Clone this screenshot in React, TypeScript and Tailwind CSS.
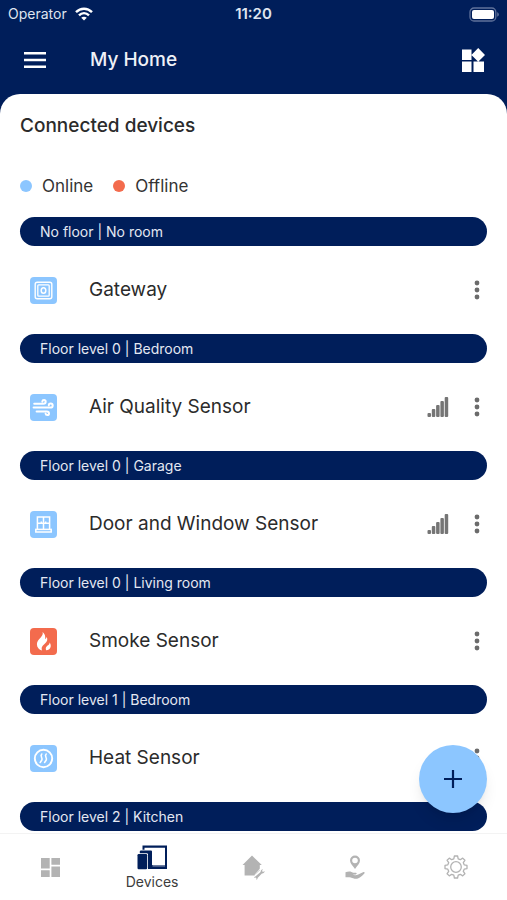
import type { ReactNode } from "react";

type Device = {
    place: string;
    name: string;
    icon: ReactNode;
    online: boolean;
    signal?: boolean;
};

function GatewayIcon() {
    return (
        <svg viewBox="0 0 27 27" className="size-[27px]" fill="none" stroke="#fff">
            <rect x="5.2" y="5.2" width="16.6" height="16.6" rx="2" strokeWidth="1.4" />
            <rect x="7.800" y="7.800" width="11.400" height="11.400" rx="1" strokeWidth="1.300" />
            <ellipse cx="13.5" cy="13.5" rx="2.3" ry="2.8" strokeWidth="1.5" />
        </svg>
    );
}

function WindIcon() {
    return (
        <svg viewBox="0 0 27 27" className="size-[27px]" fill="none" stroke="#fff" strokeWidth="2" strokeLinecap="round">
            <path d="M4.2 9.8h9.2c1.5 0 2.3-.9 2.3-2s-.8-1.7-1.7-1.7c-.9 0-1.6.6-1.7 1.4" />
            <path d="M3.6 13.6h16.6c1.6 0 2.5-1 2.5-2.2s-.9-2-2-2c-1.1 0-1.9.8-1.9 1.8" />
            <path d="M6.6 17.4h10.2c1.4 0 2.2.9 2.2 2s-.8 1.7-1.7 1.7c-.9 0-1.6-.6-1.7-1.4" />
        </svg>
    );
}

function WindowIcon() {
    return (
        <svg viewBox="0 0 27 27" className="size-[27px]" fill="none" stroke="#fff" strokeWidth="1.5">
            <path d="M7.4 18.4V6h12.2v12.4M13.5 6v12.4M7.4 12.2h12.2M11.3 12.2v-1.8M15.7 12.2v-1.8" />
            <rect x="5.8" y="18.4" width="15.4" height="2.6" />
        </svg>
    );
}

function FlameIcon() {
    return (
        <svg viewBox="0 0 27 27" className="size-[27px]" fill="#fff">
            <path d="M12.6 4c.6 2.4-.4 3.8-2.1 5.7C8.5 11.9 6.9 13.5 6.9 16.3c0 3.2 2.1 5.4 5.2 6.3-.8-1.9-.5-3.5.8-5 1.3-1.5 3.6-2.700 4.2-5 .4-1.4.1-2.6-.5-3.500-.2 1-.6 1.700-1.400 2.200.3-3.100-.4-5.700-2.600-7.300z" />
            <path d="M19.5 14.5c.2 1.4-.6 2.1-1.900 3.100-1.500 1.100-2.400 2.500-1.500 4.700 2.500-.2 4.300-1.600 4.600-3.800.2-1.600-.3-3-1.200-4z" />
        </svg>
    );
}

function HeatIcon() {
    return (
        <svg viewBox="0 0 27 27" className="size-[27px]" fill="none" stroke="#fff" strokeLinecap="round">
            <circle cx="13.5" cy="13.5" r="8.7" strokeWidth="1.9" />
            <path d="M11.800 9c-2.400 2.200 1.400 3.800 0 6.200-.4.800-1 1.500-1.600 2.200M16.200 9c-2.400 2.200 1.400 3.800 0 6.200-.4.800-1 1.500-1.600 2.200" strokeWidth="1.6" />
        </svg>
    );
}

function SignalIcon() {
    return (
        <svg viewBox="0 0 22 20" className="h-5 w-[22px]" fill="#757575" role="img" aria-label="Signal strength">
            <rect x="0.5" y="16" width="3.500" height="4" rx="1" />
            <rect x="4.8" y="12" width="3.500" height="8" rx="1" />
            <rect x="9.1" y="8" width="3.500" height="12" rx="1" />
            <rect x="13.4" y="4" width="3.500" height="16" rx="1" />
            <rect x="17.7" y="0" width="3.500" height="20" rx="1" />
        </svg>
    );
}

const devices: Device[] = [
    { place: "No floor | No room", name: "Gateway", icon: <GatewayIcon />, online: true },
    { place: "Floor level 0 | Bedroom", name: "Air Quality Sensor", icon: <WindIcon />, online: true, signal: true },
    { place: "Floor level 0 | Garage", name: "Door and Window Sensor", icon: <WindowIcon />, online: true, signal: true },
    { place: "Floor level 0 | Living room", name: "Smoke Sensor", icon: <FlameIcon />, online: false },
    { place: "Floor level 1 | Bedroom", name: "Heat Sensor", icon: <HeatIcon />, online: true },
];

function PlaceBar({ children }: { children: ReactNode }) {
    return (
        <h2 className="flex h-[29px] items-center rounded-full bg-[#001e5a] px-5 text-sm text-[#e4e8f2]">{children}</h2>
    );
}

function StatusBar() {
    return (
        <div className="grid h-7 grid-cols-3 items-center px-2 text-sm text-[#dfe4ef]">
            <div className="flex items-center gap-2">
                <span>Operator</span>
                <svg viewBox="0 0 18 14" className="h-[14px] w-[18px]" fill="none" stroke="#fff" strokeWidth="2.4">
                    <path d="M1 5.2c4.600-4.700 11.400-4.700 16 0" />
                    <path d="M4 8.3c2.900-2.900 7.100-2.900 10 0" />
                    <path d="M9 13.6 6.2 10.8c1.600-1.500 4-1.500 5.600 0z" fill="#fff" stroke="none" />
                </svg>
            </div>
            <div className="text-center text-[15px] font-semibold">11:20</div>
            <svg viewBox="0 0 31 15" className="h-[15px] w-[31px] justify-self-end" fill="none">
                <rect x="2" y="1" width="25.800" height="13" rx="4" stroke="#5f729b" strokeWidth="1.3" />
                <rect x="4" y="3" width="22" height="9" rx="2" fill="#fff" />
                <path d="M29.200 5.3v4.400c1-.4 1.700-1.200 1.700-2.200s-.7-1.800-1.700-2.200z" fill="#5f729b" />
            </svg>
        </div>
    );
}

function Header() {
    return (
        <header className="flex h-[66px] items-center px-5 pb-0.5 text-white">
            <button aria-label="Open menu" className="p-1">
                <svg viewBox="0 0 22 16" className="h-4 w-[22px]" fill="#fff">
                    <path d="M0 0h22v2.500H0zM0 6.700h22v2.500H0zM0 13.400h22v2.500H0z" />
                </svg>
            </button>
            <h1 className="ml-10 flex-1 text-[19px] font-medium text-[#eef1f7]">My Home</h1>
            <button aria-label="Widgets">
                <svg viewBox="1 0 25 24" className="h-6 w-[25px]" fill="#fff">
                    <path d="M0 1.500h10.500V12H0zM0 13.500h10.500V24H0zM12.500 13.500H23V24H12.500zM17.200 0l6.800 6.900-6.800 6.800-6.800-6.800z" />
                </svg>
            </button>
        </header>
    );
}

function BottomNav() {
    return (
        <nav className="grid h-[67px] shrink-0 grid-cols-5 border-t border-[#f3f3f3] bg-white text-[#b3b3b3]">
            <a href="#dashboard" aria-label="Dashboard" className="flex items-center justify-center">
                <svg viewBox="0 0 19 19" className="size-[19px]" fill="currentColor">
                    <path d="M0 0h8.700v10.500H0zM0 12.300h8.700V19H0zM10.400 0H19v6.700h-8.600zM10.400 8.500H19V19h-8.600z" />
                </svg>
            </a>
            <a href="#devices" aria-current="page" className="flex flex-col items-center justify-center gap-0.5 pt-0.5 text-sm text-[#3c3c3c]">
                <svg viewBox="0 0 30 25" className="h-[25px] w-[30px]" fill="#001e5a">
                    <path fillRule="evenodd" d="M5.500.5H30V24H15v-4h13V2.800H7.500v2h-2z" />
                    <path d="M15.500 20.900H28" stroke="#fff" strokeWidth=".7" />
                    <path d="M3.500 5.500H14a1 1 0 0 1 1 1V24H11V9.500a1.300 1.300 0 0 0-1.300-1.300H2.800V6.300z" />
                    <rect x=".5" y="9" width="9.700" height="15.300" rx="1.200" />
                </svg>
                Devices
            </a>
            <a href="#maintenance" aria-label="Maintenance" className="flex items-center justify-center">
                <svg viewBox="0 0 23 25" className="h-[25px] w-[23px]" fill="currentColor">
                    <path d="M10 .5 19.800 10h-2v5.200L12.600 20.500H2.600V10H.5z" />
                    <path d="M12.600 20.300 17.200 15l.6-1.200" fill="none" stroke="#fff" strokeWidth=".8" />
                    <path d="M13.300 21.500 18.600 17c-.1-1.300.8-2.600 2.300-2.700l-.9 1.600 1 1 1.600-.8c.1 1.500-1.300 2.500-2.700 2.300l-4.300 4.700c.1 1-.6 1.700-1.500 1.700l.4-1.400-.8-.8-1.400.3c0-.8.200-1.300 1-1.400z" />
                </svg>
            </a>
            <a href="#services" aria-label="Services" className="flex items-center justify-center">
                <svg viewBox="0 0 20 25" className="h-[25px] w-5" fill="currentColor">
                    <path fillRule="evenodd" d="M10 .5a5 5 0 0 1 5 5c0 2.700-2.500 5-5 8.500-2.500-3.500-5-5.800-5-8.500a5 5 0 0 1 5-5zm0 2.200a2.800 2.800 0 1 0 0 5.600 2.800 2.800 0 0 0 0-5.600z" />
                    <path d="M.5 17.300c2.200-1 4.300-1.200 6-.4 1.400.7 2.700.9 4.300.9 1.200 0 1.200 1.500 0 1.700l-3.200.2c2 .7 4.200.5 5.600-.3l4.800-2.200c1.300-.6 2.200.2 1.300 1.300-2 2.300-4.700 4.800-7.200 5.200-2.700.3-4.500-.6-6.200-1.200-1.800-.5-3.500-.3-5.400-.3z" />
                </svg>
            </a>
            <a href="#settings" aria-label="Settings" className="flex items-center justify-center">
                <svg viewBox="0 0 24 24" className="size-6" fill="none" stroke="currentColor" strokeWidth="1.300" strokeLinejoin="round">
                    <path d="M10.400 1h3.200l.6 2.800 2.100.9 2.400-1.600 2.200 2.200-1.600 2.400.9 2.100 2.800.6v3.200l-2.800.6-.9 2.100 1.600 2.400-2.200 2.200-2.400-1.600-2.100.9-.6 2.800h-3.200l-.6-2.800-2.100-.9-2.400 1.600-2.200-2.200 1.600-2.400-.9-2.100L1 13.600v-3.200l2.800-.6.9-2.100-1.600-2.400 2.200-2.200 2.400 1.600 2.100-.9z" />
                    <circle cx="12" cy="12" r="5.300" />
                </svg>
            </a>
        </nav>
    );
}

export default function App() {
    return (
        <div className="flex h-screen flex-col overflow-hidden bg-[#001e5a] font-['Inter',sans-serif]">
            <StatusBar />
            <Header />
            <div className="relative flex min-h-0 flex-1 flex-col">
                <main className="flex-1 overflow-y-auto rounded-t-[20px] bg-white px-5 [scrollbar-width:none]">
                    <h2 className="pt-[18px] text-[19px] leading-7 font-medium text-[#2b2b2b]">Connected devices</h2>
                    <div className="mt-[34px] flex items-center gap-5 text-[17px] leading-6 text-[#333]">
                        <span className="flex items-center gap-2.5">
                            <span className="size-3 rounded-full bg-[#8cc6ff]"></span>
                            Online
                        </span>
                        <span className="flex items-center gap-2.5">
                            <span className="size-3 rounded-full bg-[#f36b4d]"></span>
                            Offline
                        </span>
                    </div>

                    <div className="mt-[19px]">
                        {devices.map((device) => (
                            <section key={device.place}>
                                <PlaceBar>{device.place}</PlaceBar>
                                <div className="flex h-[88px] items-center pr-1.5 pl-2.5">
                                    <span className={device.online ? "rounded bg-[#8cc6ff]" : "rounded bg-[#f36b4d]"}>{device.icon}</span>
                                    <h3 className="ml-8 flex-1 text-[19px] leading-7 text-[#2b2b2b]">{device.name}</h3>
                                    {device.signal && <SignalIcon />}
                                    <button aria-label={"Options for " + device.name} className="ml-6 flex w-2 justify-center">
                                        <svg viewBox="0 0 6 20" className="h-5 w-1.5" fill="#6b6b6b">
                                            <circle cx="3" cy="3" r="2.4" />
                                            <circle cx="3" cy="10" r="2.4" />
                                            <circle cx="3" cy="17" r="2.4" />
                                        </svg>
                                    </button>
                                </div>
                            </section>
                        ))}
                        <PlaceBar>Floor level 2 | Kitchen</PlaceBar>
                    </div>
                </main>
                <button aria-label="Add device" className="absolute right-5 bottom-5 flex size-[68px] items-center justify-center rounded-full bg-[#8cc6ff] shadow-lg">
                    <svg viewBox="0 0 18 18" className="size-[18px]" stroke="#001e5a" strokeWidth="2.2">
                        <path d="M9 0v18M0 9h18" />
                    </svg>
                </button>
            </div>
            <BottomNav />
        </div>
    );
}
